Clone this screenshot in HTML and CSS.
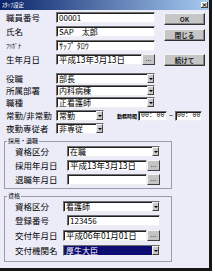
FILE: index.html
```html
<!DOCTYPE html>
<html lang="ja">
<head>
<meta charset="utf-8">
<title>ｽﾀｯﾌ設定</title>
<link rel="stylesheet" href="styles.css">
</head>
<body>
<div class="window">
    <div class="titlebar">
        <span class="title">ｽﾀｯﾌ設定</span>
        <span class="close">
            <svg width="7" height="6" viewBox="0 0 7 6"><path d="M2 1.5L5 4.5M5 1.5L2 4.5" stroke="#000" stroke-width="1"/></svg>
        </span>
    </div>

    <div class="head">
        <div class="fields">
            <div class="row">
                <span class="lbl">職員番号</span>
                <div class="box wide">00001</div>
            </div>
            <div class="row gap3">
                <span class="lbl">氏名</span>
                <div class="box wide">SAP　太郎</div>
            </div>
            <div class="row gap3">
                <span class="lbl kana">ﾌﾘｶﾞﾅ</span>
                <div class="box wide">ｻｯﾌﾟ ﾀﾛｳ</div>
            </div>
            <div class="row gap3">
                <span class="lbl">生年月日</span>
                <div class="date wide">
                    <div class="box date-val">平成13年3月13日</div>
                    <span class="dots">...</span>
                </div>
            </div>
            <div class="row gap8">
                <span class="lbl">役職</span>
                <div class="box combo wide"><span class="val">部長</span><span class="arrow"></span></div>
            </div>
            <div class="row gap1">
                <span class="lbl">所属部署</span>
                <div class="box combo wide"><span class="val">内科病棟</span><span class="arrow"></span></div>
            </div>
            <div class="row gap1">
                <span class="lbl">職種</span>
                <div class="box combo wide"><span class="val">正看護師</span><span class="arrow"></span></div>
            </div>
        </div>

        <div class="buttons">
            <button class="btn ok">OK</button>
            <button class="btn close-btn">閉じる</button>
            <button class="btn next">続けて</button>
        </div>
    </div>

    <div class="row line gap2">
        <span class="lbl">常勤/非常勤</span>
        <div class="box combo short"><span class="val">常勤</span><span class="arrow"></span></div>
        <span class="small-lbl">勤務時間</span>
        <div class="box time">00: 00</div>
        <span class="tilde">~</span>
        <div class="box time">00: 00</div>
    </div>
    <div class="row line gap2">
        <span class="lbl">夜勤専従者</span>
        <div class="box combo short"><span class="val">非専従</span><span class="arrow"></span></div>
    </div>

    <fieldset class="group first">
        <legend>採用・退職</legend>
        <div class="row">
            <span class="lbl g1">資格区分</span>
            <div class="box combo g-wide1"><span class="val">在職</span><span class="arrow"></span></div>
        </div>
        <div class="row gap3">
            <span class="lbl g1">採用年月日</span>
            <div class="date g-wide1">
                <div class="box date-val">平成13年3月13日</div>
                <span class="dots">...</span>
            </div>
        </div>
        <div class="row gap3">
            <span class="lbl g1">退職年月日</span>
            <div class="date g-wide1">
                <div class="box date-val"></div>
                <span class="dots">...</span>
            </div>
        </div>
    </fieldset>

    <fieldset class="group second">
        <legend>資格</legend>
        <div class="row">
            <span class="lbl g2">資格区分</span>
            <div class="box combo g-wide2"><span class="val">看護師</span><span class="arrow"></span></div>
        </div>
        <div class="row gap3">
            <span class="lbl g2">登録番号</span>
            <div class="box reg">123456</div>
        </div>
        <div class="row gap4">
            <span class="lbl g2">交付年月日</span>
            <div class="date g-wide2">
                <div class="box date-val">平成06年01月01日</div>
                <span class="dots">...</span>
            </div>
        </div>
        <div class="row gap4">
            <span class="lbl g2">交付機関名</span>
            <div class="box combo g-wide2 selected"><span class="val">厚生大臣</span><span class="arrow"></span></div>
        </div>
    </fieldset>
</div>
</body>
</html>
```

FILE: styles.css
```css
body {
    margin: 0;
    background-color: #fff;
    font-family: "Noto Sans CJK JP", "Noto Sans", sans-serif;
    color: #000;
}

.window {
    width: 212px;
    height: 271px;
    box-sizing: border-box;
    background-color: #ececf8;
    border-right: 3px solid #161616;
    border-bottom: 3px solid #161616;
    overflow: hidden;
}

/* title bar */
.titlebar {
    height: 10px;
    display: flex;
    align-items: center;
    justify-content: space-between;
    padding: 0 1px 0 2px;
    background: linear-gradient(to right, #0a246a, #a6caf0);
}

.title {
    color: #fff;
    font-size: 5.5px;
    line-height: 6px;
}

.close {
    display: flex;
    width: 7px;
    height: 6px;
    box-sizing: border-box;
    background-color: #d4d0c8;
    box-shadow: inset -1px -1px 0 #404040, inset 1px 1px 0 #fff;
}

/* rows */
.head {
    display: flex;
    margin-top: 2px;
    padding-left: 6px;
}

.fields {
    display: flex;
    flex-direction: column;
}

.row {
    display: flex;
    align-items: center;
    height: 11px;
}

.line {
    padding-left: 6px;
}

.gap1 { margin-top: 1px; }
.gap2 { margin-top: 2px; }
.gap3 { margin-top: 3px; }
.gap4 { margin-top: 4px; }
.gap8 { margin-top: 8px; }

.lbl {
    width: 50px;
    flex: none;
    font-size: 8.5px;
    line-height: 11px;
    white-space: nowrap;
}

.lbl.kana {
    font-size: 6px;
}

.lbl.g1 { width: 52px; }
.lbl.g2 { width: 48px; }

/* inputs */
.box {
    box-sizing: border-box;
    height: 11px;
    display: flex;
    align-items: center;
    padding-left: 2px;
    background-color: #fff;
    border: 1px solid;
    border-color: #707070 #f0f0f0 #f0f0f0 #707070;
    box-shadow: inset 1px 1px 0 #202020;
    font-size: 8px;
    line-height: 9px;
    white-space: nowrap;
    overflow: hidden;
}

.wide { width: 99px; }
.short { width: 48px; }
.g-wide1 { width: 93px; }
.g-wide2 { width: 97px; }

.reg {
    width: 93px;
    margin-left: 4px;
}

.combo {
    padding-right: 0;
}

.combo .val {
    flex: 1;
    height: 9px;
    line-height: 9px;
}

.arrow {
    width: 7px;
    height: 9px;
    flex: none;
    box-sizing: border-box;
    display: flex;
    align-items: center;
    justify-content: center;
    background-color: #c8c8c8;
    border: 1px solid;
    border-color: #f4f4f4 #404040 #404040 #f4f4f4;
}

.arrow::after {
    content: "";
    border-left: 2px solid transparent;
    border-right: 2px solid transparent;
    border-top: 2px solid #000;
}

.selected .val {
    background-color: #0c0c72;
    color: #fff;
    margin-left: -1px;
    padding-left: 1px;
}

.date {
    display: flex;
    height: 11px;
}

.date-val {
    flex: 1;
    font-size: 8.5px;
}

.dots {
    width: 13px;
    height: 11px;
    flex: none;
    box-sizing: border-box;
    background-color: #c4c4c4;
    border: 1px solid;
    border-color: #f4f4f4 #404040 #404040 #f4f4f4;
    font-size: 7px;
    line-height: 8px;
    text-align: center;
    font-family: "Liberation Sans", sans-serif;
}

/* shift hours */
.small-lbl {
    margin-left: 13px;
    width: 21px;
    font-size: 5px;
    font-weight: bold;
    white-space: nowrap;
}

.time {
    width: 29px;
    height: 10px;
    font-family: "Liberation Mono", monospace;
    font-size: 6.5px;
    padding-left: 2px;
}

.time + .tilde + .time {
    width: 27px;
    padding-left: 1px;
}

.tilde {
    width: 8px;
    font-size: 7px;
    text-align: center;
    font-family: "Liberation Sans", sans-serif;
}

/* buttons */
.buttons {
    display: flex;
    flex-direction: column;
    margin-left: 9px;
}

.btn {
    width: 41px;
    height: 12px;
    padding: 0;
    background-color: #c6c6c6;
    border: 1px solid;
    border-color: #f4f4f4 #303030 #303030 #f4f4f4;
    box-shadow: inset -1px -1px 0 #888;
    font-family: "Noto Sans CJK JP", sans-serif;
    font-size: 6.5px;
    font-weight: bold;
    line-height: 9px;
    color: #202020;
}

.ok { margin-top: 1px; }
.close-btn { margin-top: 4px; }
.next { margin-top: 13px; }

/* group boxes */
.group {
    width: 168px;
    min-width: 0;
    box-sizing: border-box;
    margin: 3px 0 0 4px;
    padding: 1px 0 3px 0;
    border: 1px solid #9a9aa8;
}

.group .row {
    padding-left: 10px;
}

.group.second {
    margin-top: 3px;
    padding-bottom: 5px;
}

legend {
    margin-left: 2px;
    padding: 0 1px;
    font-size: 6px;
    line-height: 8px;
}
```
